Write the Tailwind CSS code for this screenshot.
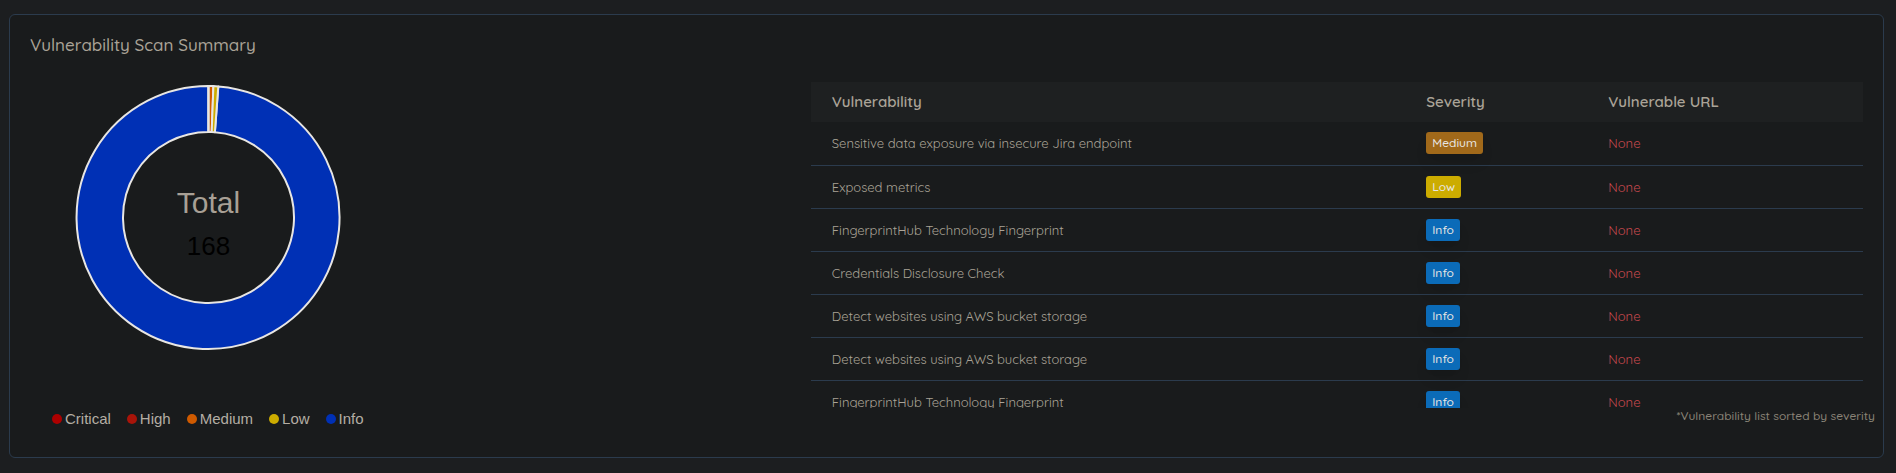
<!DOCTYPE html>
<html lang="en">
<head>
<meta charset="utf-8">
<meta name="viewport" content="width=device-width, initial-scale=1">
<title>Vulnerability Scan Summary</title>
<script src="https://cdn.jsdelivr.net/npm/@tailwindcss/browser@4"></script>
</head>
<body class="min-h-screen bg-[#1c1e20] pt-[14px] pr-3 pb-[14px] pl-[9px] font-['Quicksand','Lato',sans-serif] text-[#aaa397]">
<section class="rounded-md border border-[#2b3b4d] bg-[#191b1c] px-5 pb-7">
  <h2 class="pt-4 text-[17px] leading-7 font-medium text-[#aaa397]">Vulnerability Scan Summary</h2>
  <div class="grid grid-cols-[5fr_7fr] pt-[23px]">
    <div class="font-['Liberation_Sans',sans-serif]">
      <svg class="block" width="358" height="285" viewBox="0 1 358 285" role="img" aria-label="Total 168 vulnerabilities">
        <g stroke="#e8e6e3" stroke-width="2" stroke-linejoin="round">
          <path fill="#0030b5" d="M188.3 5.4A131.5 131.5 0 1 1 178.5 5L178.5 51A85.500 85.500 0 1 0 184.900 51.240Z"/>
          <path fill="#cf5a00" d="M178.500 5A131.500 131.500 0 0 1 183.400 5.100L181.700 51.060A85.500 85.500 0 0 0 178.500 51Z"/>
          <path fill="#ccac00" d="M183.400 5.100A131.500 131.500 0 0 1 188.300 5.400L184.900 51.240A85.500 85.500 0 0 0 181.700 51.060Z"/>
          <path d="M178.500 5V51"/>
        </g>
        <text x="178.500" y="132" text-anchor="middle" font-size="30" fill="#a8a095">Total</text>
        <text x="178.500" y="174" text-anchor="middle" font-size="26" fill="#000">168</text>
      </svg>
      <ul class="flex gap-4 pt-[42px] pl-[22px] text-[15px] leading-5 text-[#b4aea4]">
        <li class="flex items-center gap-[3px]"><span class="size-[10px] rounded-full bg-[#ad0000]"></span>Critical</li>
        <li class="flex items-center gap-[3px]"><span class="size-[10px] rounded-full bg-[#a81409]"></span>High</li>
        <li class="flex items-center gap-[3px]"><span class="size-[10px] rounded-full bg-[#cf5a00]"></span>Medium</li>
        <li class="flex items-center gap-[3px]"><span class="size-[10px] rounded-full bg-[#ccac00]"></span>Low</li>
        <li class="flex items-center gap-[3px]"><span class="size-[10px] rounded-full bg-[#0030b5]"></span>Info</li>
      </ul>
    </div>
    <div class="pl-[17px]">
      <div class="h-[326px] overflow-y-auto [scrollbar-width:none]">
        <table class="w-full table-fixed text-left text-[13px] leading-5">
          <colgroup><col class="w-[56.5%]"><col class="w-[17.3%]"><col></colgroup>
          <thead class="bg-[#1e2021] text-[15px] text-[#aaa397]">
            <tr class="h-10"><th class="px-[21px] font-semibold">Vulnerability</th><th class="px-[21px] font-semibold">Severity</th><th class="px-[21px] font-semibold">Vulnerable URL</th></tr>
          </thead>
          <tbody class="[&_td]:px-[21px] [&_tr]:h-[43px] [&_tr]:border-b [&_tr]:border-[#2b3b4d]">
            <tr><td>Sensitive data exposure via insecure Jira endpoint</td><td><span class="inline-block rounded-[3px] bg-[#a1691a] px-[6px] text-xs leading-[22px] font-medium text-[#e8e6e3] shadow-lg">Medium</span></td><td class="text-[#c7494e]">None</td></tr>
            <tr><td>Exposed metrics</td><td><span class="inline-block rounded-[3px] bg-[#ccac00] px-[6px] text-xs leading-[22px] font-medium text-[#e8e6e3]">Low</span></td><td class="text-[#c7494e]">None</td></tr>
            <tr><td>FingerprintHub Technology Fingerprint</td><td><span class="inline-block rounded-[3px] bg-[#0b6bb8] px-[6px] text-xs leading-[22px] font-medium text-[#e8e6e3] shadow-lg">Info</span></td><td class="text-[#c7494e]">None</td></tr>
            <tr><td>Credentials Disclosure Check</td><td><span class="inline-block rounded-[3px] bg-[#0b6bb8] px-[6px] text-xs leading-[22px] font-medium text-[#e8e6e3] shadow-lg">Info</span></td><td class="text-[#c7494e]">None</td></tr>
            <tr><td>Detect websites using AWS bucket storage</td><td><span class="inline-block rounded-[3px] bg-[#0b6bb8] px-[6px] text-xs leading-[22px] font-medium text-[#e8e6e3] shadow-lg">Info</span></td><td class="text-[#c7494e]">None</td></tr>
            <tr><td>Detect websites using AWS bucket storage</td><td><span class="inline-block rounded-[3px] bg-[#0b6bb8] px-[6px] text-xs leading-[22px] font-medium text-[#e8e6e3] shadow-lg">Info</span></td><td class="text-[#c7494e]">None</td></tr>
            <tr><td>FingerprintHub Technology Fingerprint</td><td><span class="inline-block rounded-[3px] bg-[#0b6bb8] px-[6px] text-xs leading-[22px] font-medium text-[#e8e6e3] shadow-lg">Info</span></td><td class="text-[#c7494e]">None</td></tr>
          </tbody>
        </table>
      </div>
      <p class="-mr-3 text-right text-xs font-medium text-[#8a8377]">*Vulnerability list sorted by severity</p>
    </div>
  </div>
</section>
</body>
</html>
